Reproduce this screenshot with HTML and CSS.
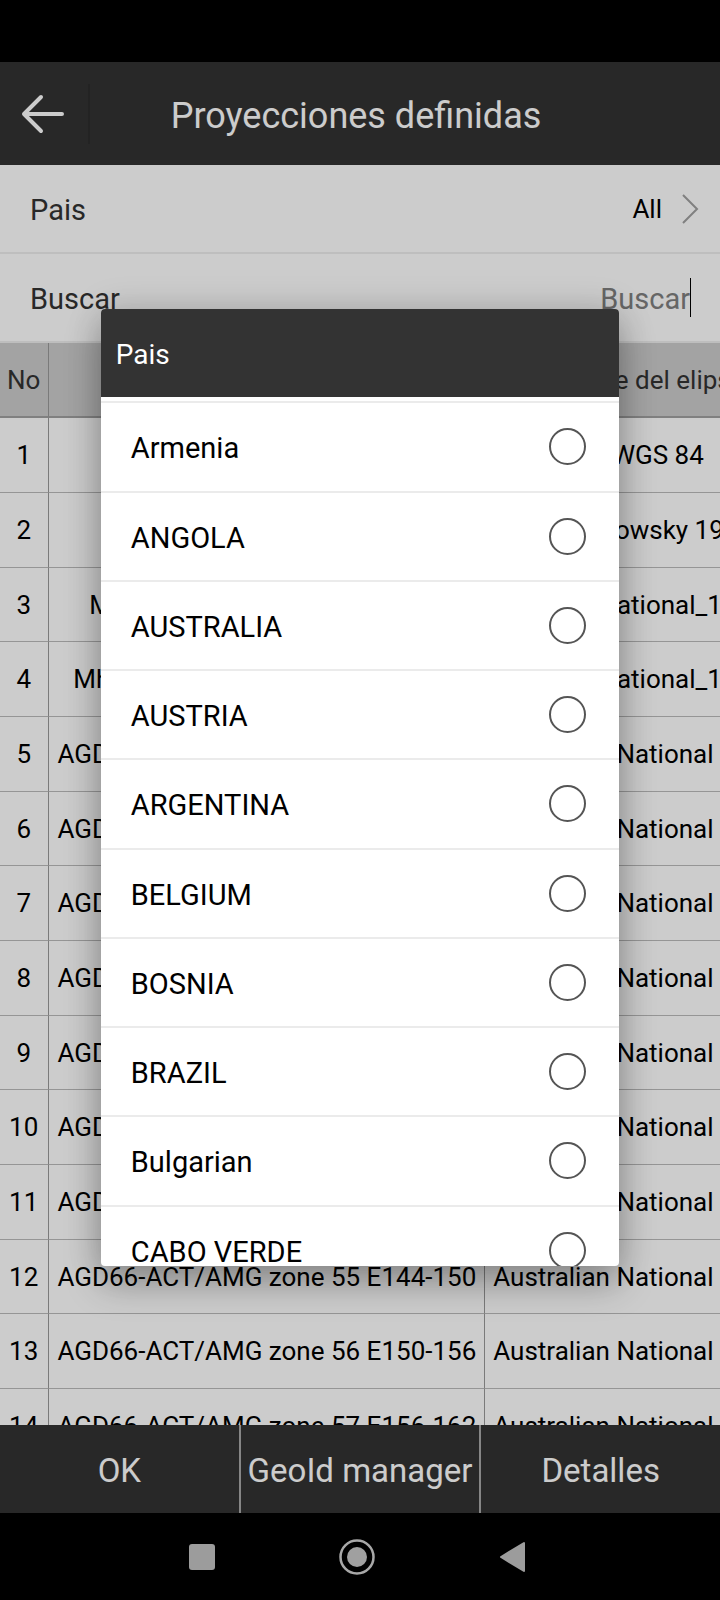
FILE: index.html
```html
<!DOCTYPE html>
<html lang="es">
<head>
    <meta charset="UTF-8">
    <meta name="viewport" content="width=device-width, initial-scale=1.0">
    <title>Proyecciones definidas</title>
    <link rel="stylesheet" href="styles.css">
</head>
<body>

    <div class="status-bar"></div>

    <div class="app">
        <header class="header">
            <button class="back" aria-label="Atrás">
                <svg width="44" height="40" viewBox="0 0 44 40" fill="none" stroke="#fff" stroke-width="4" stroke-linecap="round" stroke-linejoin="round">
                    <path d="M21 3 L4 20 L21 37 M4 20 H42"/>
                </svg>
            </button>
            <h1>Proyecciones definidas</h1>
        </header>

        <div class="field">
            <span class="field-name">Pais</span>
            <button class="country">
                All
                <svg width="18" height="30" viewBox="0 0 18 30" fill="none" stroke="#a0a0a0" stroke-width="2">
                    <path d="M1 1 L15 15 L1 29"/>
                </svg>
            </button>
        </div>
        <div class="field">
            <label class="field-name" for="search">Buscar</label>
            <div class="search">
                <input type="text" id="search" placeholder="Buscar">
                <span class="caret"></span>
            </div>
        </div>

        <div class="table-wrap">
            <table>
                <thead>
                    <tr><th>No</th><th>Nombre</th><th>Nombre del elipsoide</th></tr>
                </thead>
                <tbody>
                    <tr><td>1</td><td>WGS 84</td><td>WGS 84</td></tr>
                    <tr><td>2</td><td>Pulkovo</td><td>Krasowsky 1940</td></tr>
                    <tr><td>3</td><td>Mhast (onshore)/UTM zone 32</td><td>International_1924</td></tr>
                    <tr><td>4</td><td>Mhast (offshore) / UTM zone 32S</td><td>International_1924</td></tr>
                    <tr><td>5</td><td>AGD66-ACT/AMG zone 48 E102-108</td><td>Australian National Spheroid</td></tr>
                    <tr><td>6</td><td>AGD66-ACT/AMG zone 49 E108-114</td><td>Australian National Spheroid</td></tr>
                    <tr><td>7</td><td>AGD66-ACT/AMG zone 50 E114-120</td><td>Australian National Spheroid</td></tr>
                    <tr><td>8</td><td>AGD66-ACT/AMG zone 51 E120-126</td><td>Australian National Spheroid</td></tr>
                    <tr><td>9</td><td>AGD66-ACT/AMG zone 52 E126-132</td><td>Australian National Spheroid</td></tr>
                    <tr><td>10</td><td>AGD66-ACT/AMG zone 53 E132-138</td><td>Australian National Spheroid</td></tr>
                    <tr><td>11</td><td>AGD66-ACT/AMG zone 54 E138-144</td><td>Australian National Spheroid</td></tr>
                    <tr><td>12</td><td>AGD66-ACT/AMG zone 55 E144-150</td><td>Australian National Spheroid</td></tr>
                    <tr><td>13</td><td>AGD66-ACT/AMG zone 56 E150-156</td><td>Australian National Spheroid</td></tr>
                    <tr><td>14</td><td>AGD66-ACT/AMG zone 57 E156-162</td><td>Australian National Spheroid</td></tr>
                </tbody>
            </table>
        </div>

        <footer class="actions">
            <button>OK</button>
            <button>GeoId manager</button>
            <button>Detalles</button>
        </footer>

        <!-- Country picker -->
        <div class="overlay">
            <div class="dialog" role="dialog" aria-labelledby="dialog-title">
                <h2 id="dialog-title">Pais</h2>
                <div class="options">
                    <label class="option"><span>Armenia</span><input type="radio" name="country"></label>
                    <label class="option"><span>ANGOLA</span><input type="radio" name="country"></label>
                    <label class="option"><span>AUSTRALIA</span><input type="radio" name="country"></label>
                    <label class="option"><span>AUSTRIA</span><input type="radio" name="country"></label>
                    <label class="option"><span>ARGENTINA</span><input type="radio" name="country"></label>
                    <label class="option"><span>BELGIUM</span><input type="radio" name="country"></label>
                    <label class="option"><span>BOSNIA</span><input type="radio" name="country"></label>
                    <label class="option"><span>BRAZIL</span><input type="radio" name="country"></label>
                    <label class="option"><span>Bulgarian</span><input type="radio" name="country"></label>
                    <label class="option"><span>CABO VERDE</span><input type="radio" name="country"></label>
                </div>
            </div>
        </div>
    </div>

    <nav class="nav-bar">
        <button aria-label="Recientes">
            <svg width="36" height="36" viewBox="0 0 36 36"><rect x="5" y="5" width="26" height="26" rx="3" fill="#9c9c9c"/></svg>
        </button>
        <button aria-label="Inicio">
            <svg width="36" height="36" viewBox="0 0 36 36"><circle cx="18" cy="18" r="16.500" fill="none" stroke="#a8a8a8" stroke-width="2.500"/><circle cx="18" cy="18" r="10" fill="#a0a0a0"/></svg>
        </button>
        <button aria-label="Volver">
            <svg width="36" height="36" viewBox="0 0 36 36"><path d="M7 18 L30 4 V32 Z" fill="#9c9c9c" stroke="#9c9c9c" stroke-width="2" stroke-linejoin="round"/></svg>
        </button>
    </nav>

</body>
</html>
```
FILE: styles.css
```css
* {
    box-sizing: border-box;
}
body {
    margin: 0;
    height: 100vh;
    display: flex;
    flex-direction: column;
    overflow: hidden;
    background-color: #000;
    font-family: Roboto, sans-serif;
}
button,
input {
    font-family: inherit;
    border: none;
    background: none;
    padding: 0;
    margin: 0;
}
svg {
    display: block;
}
.status-bar {
    height: 62px;
    flex: none;
}
.app {
    position: relative;
    flex: 1;
    min-height: 0;
    display: flex;
    flex-direction: column;
    background-color: #fff;
}

/* Header */
.header {
    display: flex;
    align-items: center;
    flex: none;
    height: 103px;
    padding-right: 98px;
    background-color: #333;
    color: #fff;
}
.back {
    width: 90px;
    height: 60px;
    padding-left: 20px;
    border-right: 2px solid #2c2c2c;
}
.header h1 {
    flex: 1;
    margin: 0;
    padding-top: 4px;
    font-size: 36px;
    font-weight: 400;
    text-align: center;
}

/* Filter fields */
.field {
    display: flex;
    align-items: center;
    justify-content: space-between;
    flex: none;
    height: 89px;
    padding: 0 20px 0 30px;
    border-bottom: 2px solid #eee;
    font-size: 29px;
    color: #333;
}
.field-name {
    padding-top: 3px;
}
.country {
    display: flex;
    align-items: center;
    gap: 20px;
    font-size: 26px;
    color: #000;
}
.search {
    display: flex;
    align-items: center;
    padding-right: 9px;
}
.search input {
    width: 300px;
    padding-top: 3px;
    font-size: 29px;
    text-align: right;
    outline: none;
}
.search input::placeholder {
    color: #808080;
}
.caret {
    width: 1px;
    height: 39px;
    background-color: #000;
}

/* Projections table */
.table-wrap {
    flex: 1;
    min-height: 0;
    overflow: hidden;
}
table {
    border-collapse: separate;
    border-spacing: 0;
    font-size: 26px;
    white-space: nowrap;
}
th,
td {
    height: 75px;
    padding: 0 8px;
    border-right: 1px solid #999;
    border-bottom: 1px solid #bbb;
    font-weight: 400;
    text-align: center;
}
th:first-child,
td:first-child {
    padding: 0 8px 0 7px;
}
tr:nth-child(3n) td {
    height: 74px;
}
th {
    background-color: #ccc;
    border-bottom: 2px solid #a0a0a0;
    color: #333;
}

/* Bottom buttons */
.actions {
    display: flex;
    flex: none;
    height: 88px;
    background-color: #333;
}
.actions button {
    flex: 1 1 0;
    padding-top: 2px;
    font-size: 33px;
    color: #fff;
    white-space: nowrap;
}
.actions button + button {
    border-left: 2px solid #a8a8a8;
}

/* Dialog */
.overlay {
    position: absolute;
    inset: 0;
    display: flex;
    align-items: center;
    justify-content: center;
    background-color: rgba(0, 0, 0, 0.2);
}
.dialog {
    display: flex;
    flex-direction: column;
    width: 72%;
    height: 66%;
    overflow: hidden;
    background-color: #fff;
    border-radius: 4px;
    box-shadow: 0 18px 36px rgba(0, 0, 0, 0.28), 0 0 36px rgba(0, 0, 0, 0.14);
}
.dialog h2 {
    flex: none;
    margin: 0;
    padding: 3px 15px 0;
    background-color: #333;
    color: #fff;
    font-size: 28px;
    font-weight: 400;
    line-height: 85px;
}
.options {
    flex: 1;
    min-height: 0;
    overflow: hidden;
    padding-top: 4px;
}
.option {
    display: flex;
    align-items: center;
    justify-content: space-between;
    height: 89px;
    padding: 0 33px 0 30px;
    border-top: 2px solid #ebebeb;
    font-size: 29px;
    color: #000;
}
.option:nth-child(4n + 1) {
    height: 90px;
}
.option span {
    padding-top: 3px;
}
.option input {
    appearance: none;
    width: 37px;
    height: 37px;
    border: 2px solid #555;
    border-radius: 50%;
}
.option input:checked {
    background-color: #555;
}

/* System navigation */
.nav-bar {
    display: flex;
    justify-content: center;
    flex: none;
    height: 87px;
    padding-right: 6px;
}
.nav-bar button {
    display: flex;
    align-items: center;
    justify-content: center;
    width: 155px;
}
```
